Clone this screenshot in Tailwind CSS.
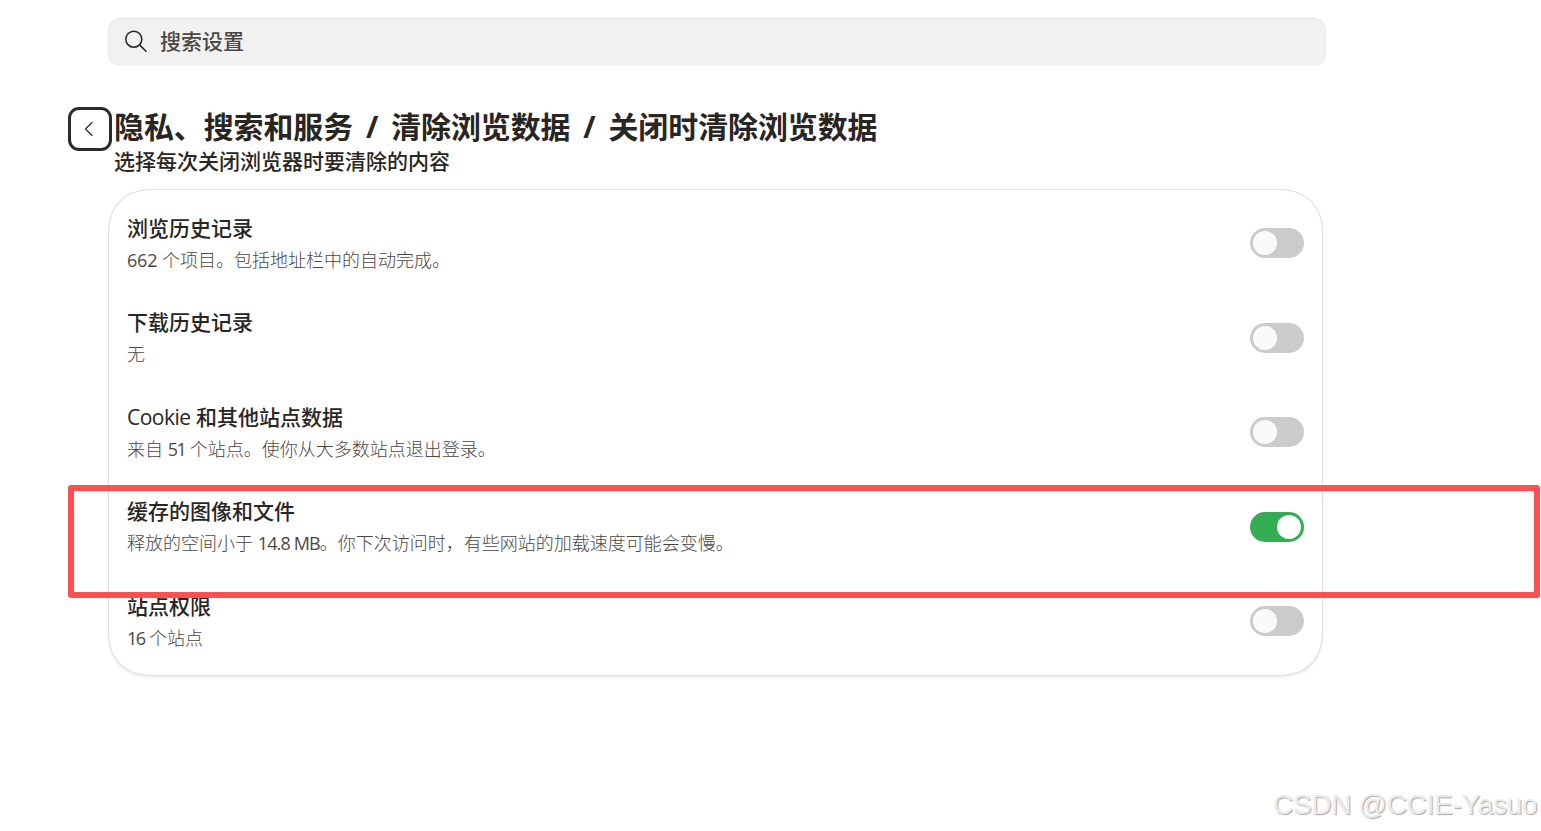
<!DOCTYPE html>
<html lang="zh-CN">
<head>
	<meta charset="UTF-8">
	<title>关闭时清除浏览数据</title>
	<script src="https://cdn.jsdelivr.net/npm/@tailwindcss/browser@4"></script>
</head>
<body class="relative h-[831px] w-[1541px] overflow-hidden bg-white font-['Open_Sans','Noto_Sans_CJK_SC',sans-serif] text-[#292522]">
	<!-- Search -->
	<header class="pt-[18px] pl-[108px]">
		<div class="flex h-12 w-[1218px] items-center rounded-xl border border-t-[#e4e4e4] border-x-[#e9e9e9] border-b-[#f0f0f0] bg-[#f1f1f1] pl-4">
			<svg class="h-6 w-6" viewBox="0 0 24 24" fill="none" stroke="#292522" stroke-width="1.5" stroke-linecap="round">
				<circle cx="8.8" cy="9.2" r="8"/>
				<path d="M14.6 14.9L21 21.3"/>
			</svg>
			<span class="ml-[11px] pb-0.5 text-[21px] leading-8 font-medium text-[#4c4642]">搜索设置</span>
		</div>
	</header>

	<main>
		<!-- Breadcrumb -->
		<div class="flex pt-[41px] pl-[68px]">
			<button class="flex h-11 w-11 items-center justify-center rounded-[11px] border-[3px] border-[#2e2a28] bg-white">
				<svg class="mr-0.5 h-4 w-4" viewBox="0 0 16 16" fill="none" stroke="#292522" stroke-width="1.2" stroke-linecap="round" stroke-linejoin="round">
					<path d="M11 1.5L4.5 8L11 14.5"/>
				</svg>
			</button>
			<div class="ml-0.5">
				<h1 class="flex h-[38px] items-center pt-0.5 text-[29.9px] font-bold whitespace-nowrap">
					<span>隐私、搜索和服务</span>
					<span class="w-[38px] text-center">/</span>
					<span>清除浏览数据</span>
					<span class="w-[38px] text-center">/</span>
					<span>关闭时清除浏览数据</span>
				</h1>
				<p class="h-8 text-[21px] leading-8 font-medium">选择每次关闭浏览器时要清除的内容</p>
			</div>
		</div>

		<!-- Data types -->
		<section class="mt-3 ml-[108px] h-[487px] w-[1215px] rounded-[46px] border border-[#dedede] bg-white pt-[5.75px] pr-[18px] pl-[18px] shadow-[0_2px_3px_rgba(0,0,0,0.07)] [corner-shape:superellipse(1.25)]">
			<div class="flex h-[94.5px] items-center justify-between">
				<div class="pt-[1.5px]">
					<h2 class="text-[21px] leading-8 font-medium">浏览历史记录</h2>
					<p class="pt-px text-[18px] leading-[31px] font-light text-[#4c4642]"><span class="font-normal tracking-[-0.2px]">662</span> 个项目。包括地址栏中的自动完成。</p>
				</div>
				<div class="flex h-[30px] w-[54px] items-center rounded-full bg-[#cbcbcb] px-[3px]"><span class="h-6 w-6 rounded-full bg-[#fafafa]"></span></div>
			</div>
			<div class="flex h-[94.5px] items-center justify-between">
				<div class="pt-px">
					<h2 class="text-[21px] leading-8 font-medium">下载历史记录</h2>
					<p class="pt-px text-[18px] leading-[31px] font-light text-[#4c4642]">无</p>
				</div>
				<div class="flex h-[30px] w-[54px] items-center rounded-full bg-[#cbcbcb] px-[3px]"><span class="h-6 w-6 rounded-full bg-[#fafafa]"></span></div>
			</div>
			<div class="flex h-[94.5px] items-center justify-between">
				<div class="pt-[1.5px]">
					<h2 class="text-[21px] leading-8 font-medium"><span class="font-normal tracking-[-0.5px]">Cookie</span> 和其他站点数据</h2>
					<p class="pt-px text-[18px] leading-[31px] font-light text-[#4c4642]">来自 <span class="font-normal tracking-[-1.6px]">51</span> 个站点。使你从大多数站点退出登录。</p>
				</div>
				<div class="flex h-[30px] w-[54px] items-center rounded-full bg-[#cbcbcb] px-[3px]"><span class="h-6 w-6 rounded-full bg-[#fafafa]"></span></div>
			</div>
			<div class="flex h-[94.5px] items-center justify-between">
				<div class="pt-px">
					<h2 class="text-[21px] leading-8 font-medium">缓存的图像和文件</h2>
					<p class="pt-px text-[18px] leading-[31px] font-light text-[#4c4642]">释放的空间小于 <span class="font-normal tracking-[-0.85px]">14.8 MB</span>。你下次访问时，有些网站的加载速度可能会变慢。</p>
				</div>
				<div class="flex h-[30px] w-[54px] items-center justify-end rounded-full bg-[#34ac53] px-[3px]"><span class="h-6 w-6 rounded-full bg-white"></span></div>
			</div>
			<div class="flex h-[94.5px] items-center justify-between">
				<div class="pt-[1.5px]">
					<h2 class="text-[21px] leading-8 font-medium">站点权限</h2>
					<p class="pt-px text-[18px] leading-[31px] font-light text-[#4c4642]"><span class="font-normal tracking-[-1.6px]">16</span> 个站点</p>
				</div>
				<div class="flex h-[30px] w-[54px] items-center rounded-full bg-[#cbcbcb] px-[3px]"><span class="h-6 w-6 rounded-full bg-[#fafafa]"></span></div>
			</div>
		</section>
	</main>

	<!-- Highlight frame -->
	<div class="pointer-events-none absolute top-[484.5px] left-[67.5px] h-[113.5px] w-[1472.5px] rounded-[3px] border-[6px] border-[#fd5050]"></div>

	<!-- Watermark -->
	<div class="absolute top-[787px] left-[1273px] font-['Liberation_Sans',sans-serif] text-[28px] leading-9 tracking-[-0.3px] whitespace-nowrap text-[#ececec] [text-shadow:1px_1px_1px_#a8a8a8]">CSDN @CCIE-Yasuo</div>
</body>
</html>
